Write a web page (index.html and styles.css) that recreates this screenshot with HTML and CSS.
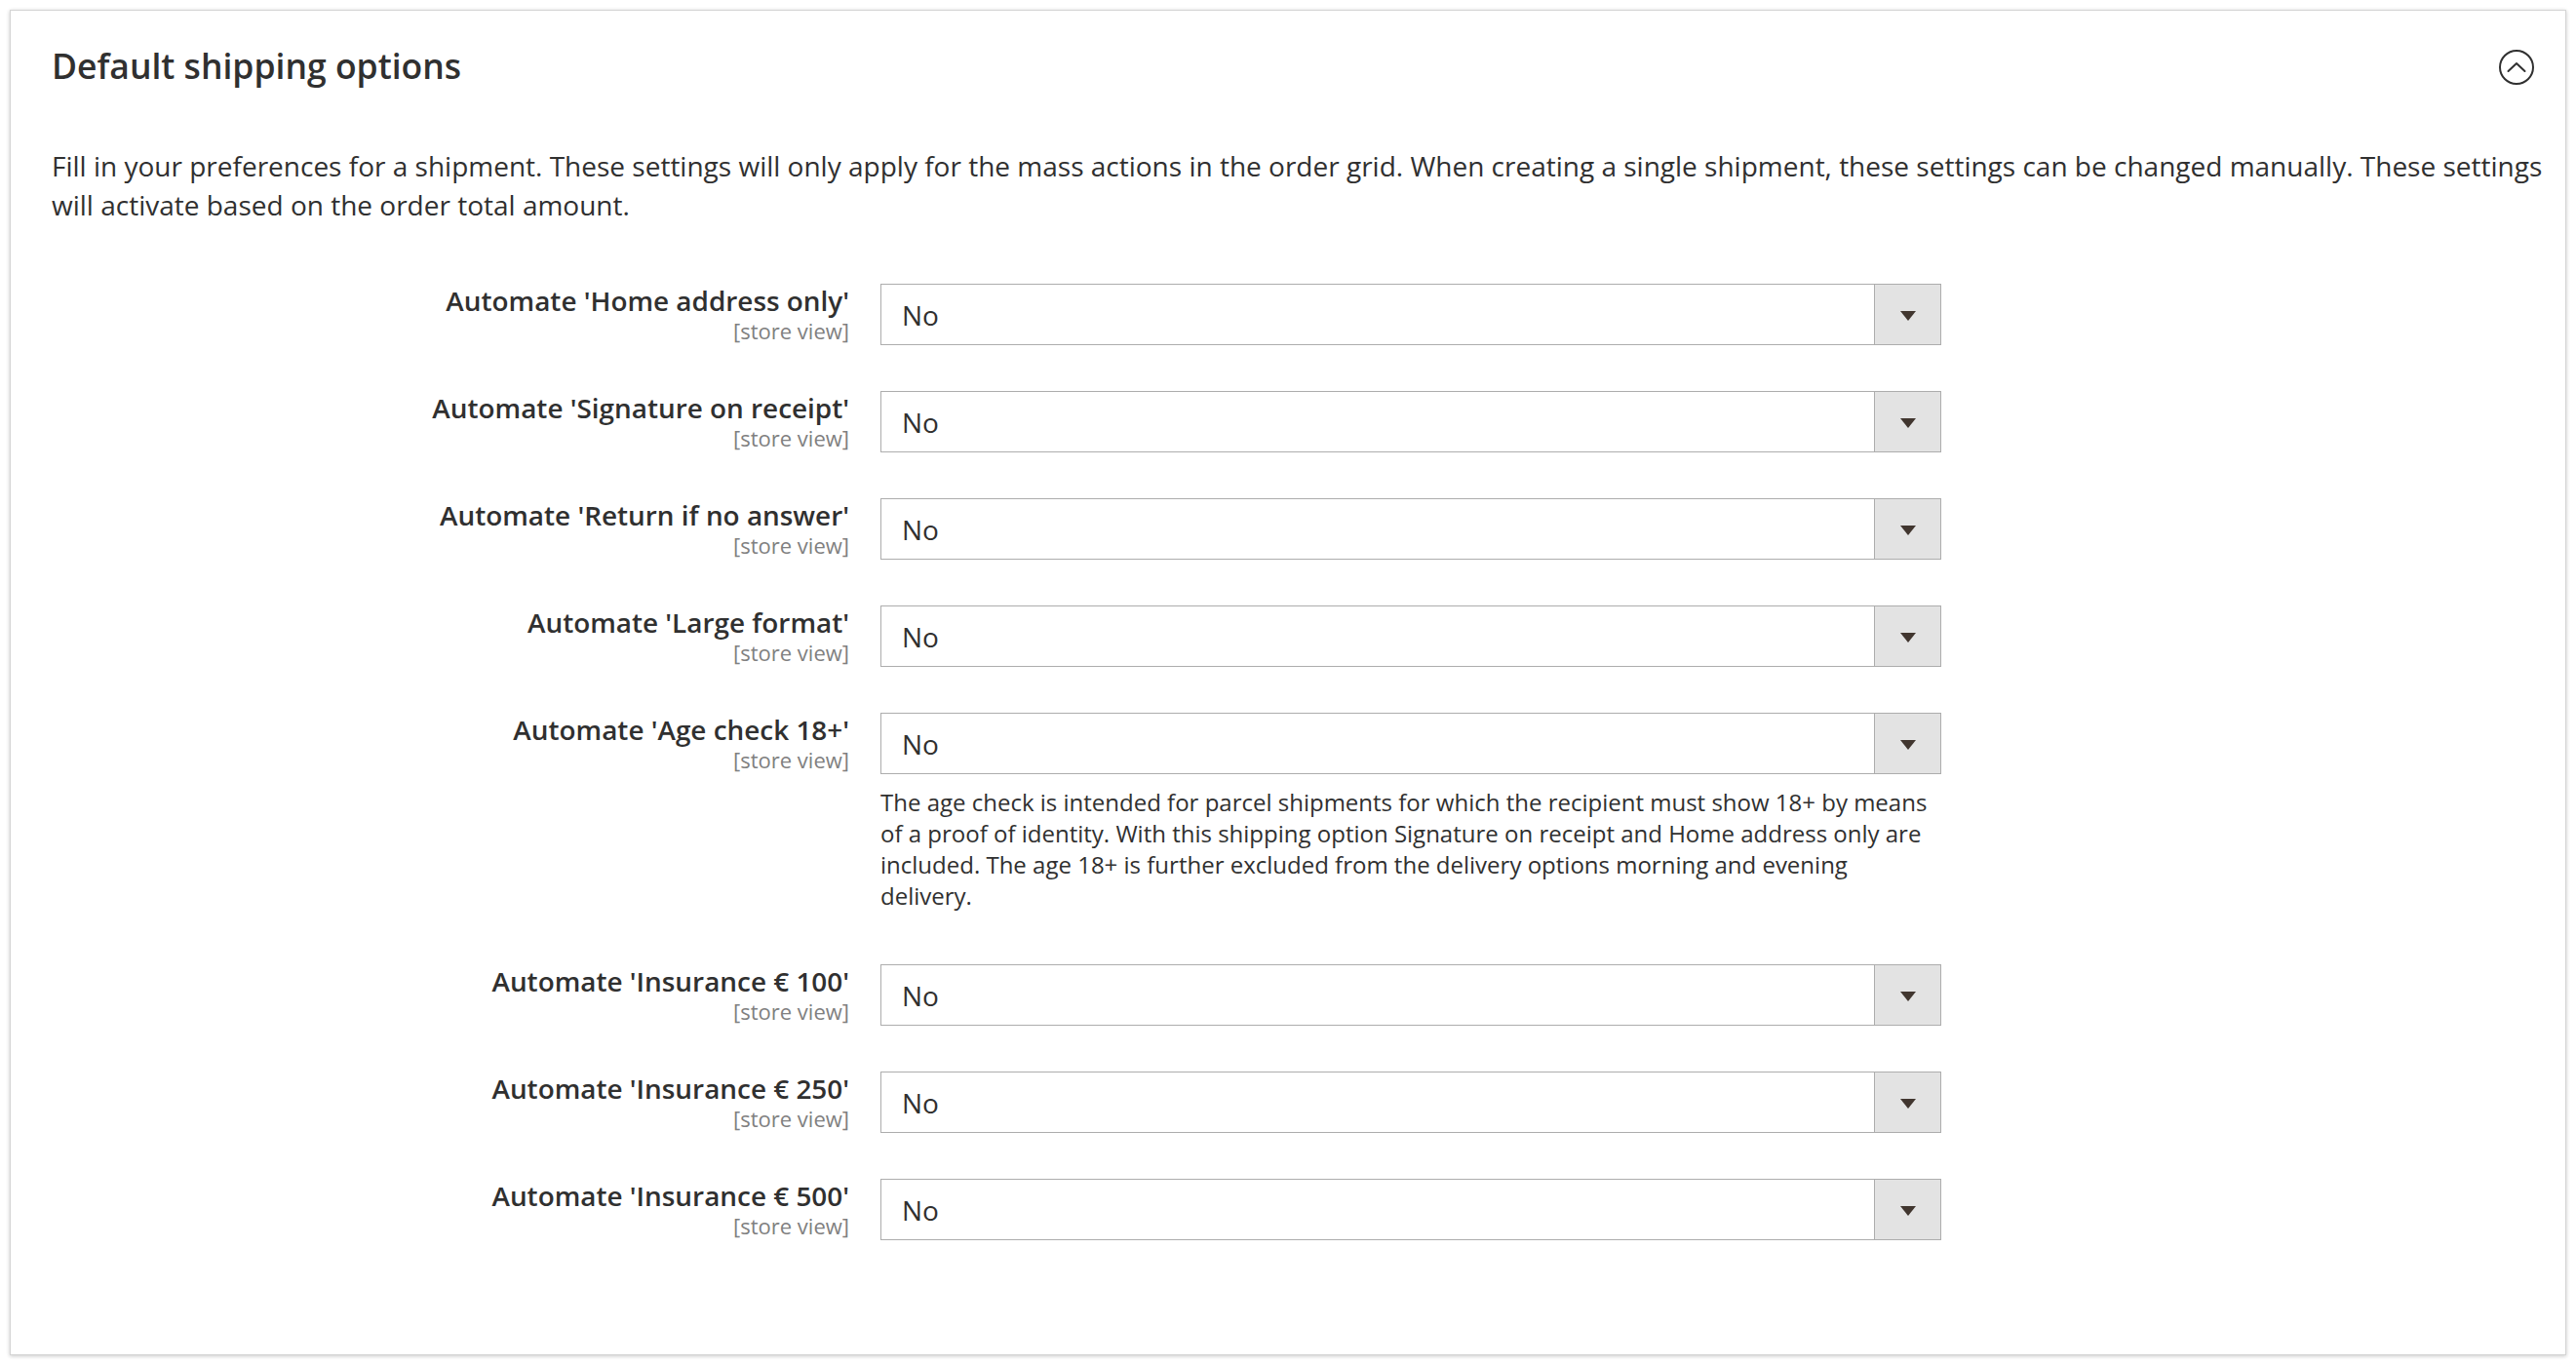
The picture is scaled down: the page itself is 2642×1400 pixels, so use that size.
FILE: index.html
```html
<!DOCTYPE html>
<html lang="en">
<head>
<meta charset="utf-8">
<title>Default shipping options</title>
<link rel="stylesheet" href="styles.css">
</head>
<body>
<section class="panel">
  <header class="panel-head">
    <h2 class="panel-title">Default shipping options</h2>
    <button class="collapse" type="button" aria-label="Collapse">
      <svg width="38" height="38" viewBox="0 0 38 38" aria-hidden="true">
        <circle cx="19" cy="19" r="17" fill="none" stroke="#303030" stroke-width="2"/>
        <polyline points="10.5,23 19,15 27.5,23" fill="none" stroke="#303030" stroke-width="2" stroke-linecap="round" stroke-linejoin="round"/>
      </svg>
    </button>
  </header>
  <p class="intro">Fill in your preferences for a shipment. These settings will only apply for the mass actions in the order grid. When creating a single shipment, these settings can be changed manually. These settings will activate based on the order total amount.</p>

  <div class="fields">
    <div class="row">
      <div class="label"><span class="label-text">Automate 'Home address only'</span><span class="scope">[store view]</span></div>
      <div class="control"><div class="select"><span class="value">No</span><span class="arrow"></span></div></div>
    </div>
    <div class="row">
      <div class="label"><span class="label-text">Automate 'Signature on receipt'</span><span class="scope">[store view]</span></div>
      <div class="control"><div class="select"><span class="value">No</span><span class="arrow"></span></div></div>
    </div>
    <div class="row">
      <div class="label"><span class="label-text">Automate 'Return if no answer'</span><span class="scope">[store view]</span></div>
      <div class="control"><div class="select"><span class="value">No</span><span class="arrow"></span></div></div>
    </div>
    <div class="row">
      <div class="label"><span class="label-text">Automate 'Large format'</span><span class="scope">[store view]</span></div>
      <div class="control"><div class="select"><span class="value">No</span><span class="arrow"></span></div></div>
    </div>
    <div class="row">
      <div class="label"><span class="label-text">Automate 'Age check 18+'</span><span class="scope">[store view]</span></div>
      <div class="control">
        <div class="select"><span class="value">No</span><span class="arrow"></span></div>
        <p class="note">The age check is intended for parcel shipments for which the recipient must show 18+ by means of a proof of identity. With this shipping option Signature on receipt and Home address only are included. The age 18+ is further excluded from the delivery options morning and evening delivery.</p>
      </div>
    </div>
    <div class="row">
      <div class="label"><span class="label-text">Automate 'Insurance € 100'</span><span class="scope">[store view]</span></div>
      <div class="control"><div class="select"><span class="value">No</span><span class="arrow"></span></div></div>
    </div>
    <div class="row">
      <div class="label"><span class="label-text">Automate 'Insurance € 250'</span><span class="scope">[store view]</span></div>
      <div class="control"><div class="select"><span class="value">No</span><span class="arrow"></span></div></div>
    </div>
    <div class="row">
      <div class="label"><span class="label-text">Automate 'Insurance € 500'</span><span class="scope">[store view]</span></div>
      <div class="control"><div class="select"><span class="value">No</span><span class="arrow"></span></div></div>
    </div>
  </div>
</section>
</body>
</html>
```
FILE: styles.css
```css
* { box-sizing: border-box; }

html, body { background: #ffffff; }

body {
  margin: 0;
  padding: 10px;
  font-family: "Open Sans", "Noto Sans", sans-serif;
  color: #303030;
}

.panel {
  width: 2622px;
  height: 1380px;
  border: 1px solid #d4d4d4;
  background: #fff;
  box-shadow: 0 1px 4px rgba(0, 0, 0, 0.22);
  padding: 36px 18px 0 42px;
}

.panel-head {
  display: flex;
  align-items: center;
  justify-content: space-between;
  height: 40px;
}

.panel-title {
  margin: 0;
  font-size: 35.5px;
  line-height: 40px;
  font-weight: 600;
  color: #303030;
}

.collapse {
  width: 38px;
  height: 38px;
  padding: 0;
  border: 0;
  background: transparent;
  display: flex;
  align-items: center;
  justify-content: center;
  margin-top: 4px;
  margin-right: 13px;
}

.intro {
  margin: 63px 0 0;
  font-size: 28px;
  line-height: 40px;
  color: #303030;
}

.fields {
  margin-top: 61px;
  display: flex;
  flex-direction: column;
  gap: 47px;
}

.row {
  display: grid;
  grid-template-columns: 818px 1088px;
  column-gap: 32px;
  align-items: start;
}

.label {
  display: flex;
  flex-direction: column;
  align-items: flex-end;
  text-align: right;
}

.label-text {
  font-size: 27.9px;
  line-height: 34px;
  font-weight: 600;
  color: #303030;
}

.scope {
  font-size: 22px;
  line-height: 28px;
  color: #808080;
}

.select {
  height: 63px;
  border: 1px solid #adadad;
  display: flex;
  align-items: stretch;
  background: #fff;
}

.value {
  flex: 1;
  display: flex;
  align-items: center;
  padding-left: 21px;
  font-size: 28px;
  color: #303030;
}

.arrow {
  width: 68px;
  border-left: 1px solid #adadad;
  background: #e3e3e3;
  position: relative;
}

.arrow::after {
  content: "";
  position: absolute;
  left: 50%;
  top: 50%;
  margin-left: -8px;
  margin-top: -4px;
  border-left: 8px solid transparent;
  border-right: 8px solid transparent;
  border-top: 10px solid #41362f;
}

.note {
  margin: 13px 0 7px;
  font-size: 24px;
  line-height: 32px;
  color: #303030;
}
```
